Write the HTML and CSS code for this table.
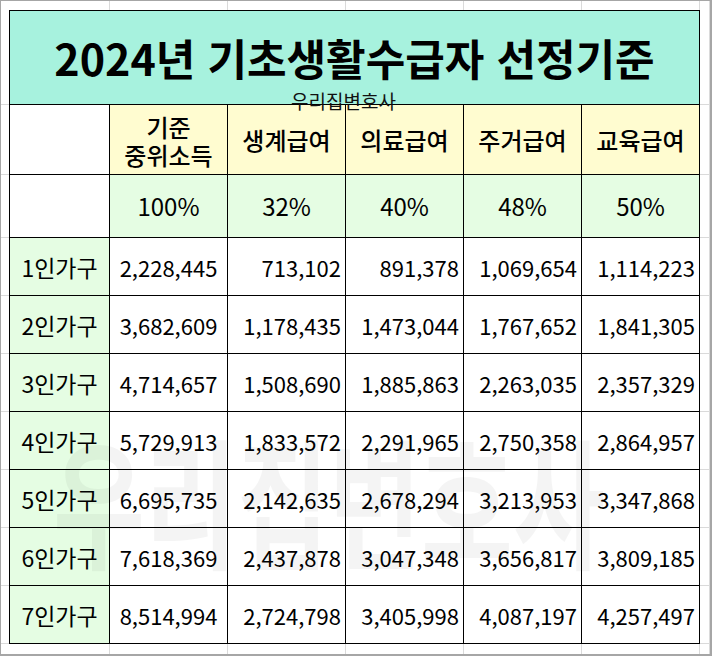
FILE: index.html
```html
<!DOCTYPE html>
<html lang="ko">
<head>
<meta charset="utf-8">
<title>2024년 기초생활수급자 선정기준</title>
<link rel="stylesheet" href="styles.css">
</head>
<body>
<div class="frame">
  <div class="sheet">
    <div class="cell title">2024년 기초생활수급자 선정기준</div>

    <div class="cell"></div>
    <div class="cell head two">기준<br>중위소득</div>
    <div class="cell head">생계급여</div>
    <div class="cell head">의료급여</div>
    <div class="cell head">주거급여</div>
    <div class="cell head">교육급여</div>

    <div class="cell"></div>
    <div class="cell pct">100%</div>
    <div class="cell pct">32%</div>
    <div class="cell pct">40%</div>
    <div class="cell pct">48%</div>
    <div class="cell pct">50%</div>

    <div class="cell label">1인가구</div>
    <div class="cell num mid">2,228,445</div>
    <div class="cell num">713,102</div>
    <div class="cell num">891,378</div>
    <div class="cell num">1,069,654</div>
    <div class="cell num">1,114,223</div>

    <div class="cell label">2인가구</div>
    <div class="cell num mid">3,682,609</div>
    <div class="cell num">1,178,435</div>
    <div class="cell num">1,473,044</div>
    <div class="cell num">1,767,652</div>
    <div class="cell num">1,841,305</div>

    <div class="cell label">3인가구</div>
    <div class="cell num mid">4,714,657</div>
    <div class="cell num">1,508,690</div>
    <div class="cell num">1,885,863</div>
    <div class="cell num">2,263,035</div>
    <div class="cell num">2,357,329</div>

    <div class="cell label">4인가구</div>
    <div class="cell num mid">5,729,913</div>
    <div class="cell num">1,833,572</div>
    <div class="cell num">2,291,965</div>
    <div class="cell num">2,750,358</div>
    <div class="cell num">2,864,957</div>

    <div class="cell label">5인가구</div>
    <div class="cell num mid">6,695,735</div>
    <div class="cell num">2,142,635</div>
    <div class="cell num">2,678,294</div>
    <div class="cell num">3,213,953</div>
    <div class="cell num">3,347,868</div>

    <div class="cell label">6인가구</div>
    <div class="cell num mid">7,618,369</div>
    <div class="cell num">2,437,878</div>
    <div class="cell num">3,047,348</div>
    <div class="cell num">3,656,817</div>
    <div class="cell num">3,809,185</div>

    <div class="cell label">7인가구</div>
    <div class="cell num mid">8,514,994</div>
    <div class="cell num">2,724,798</div>
    <div class="cell num">3,405,998</div>
    <div class="cell num">4,087,197</div>
    <div class="cell num">4,257,497</div>

    <div class="stamp">우리집변호사</div>
    <div class="watermark" aria-hidden="true">우리집변호사</div>
  </div>
</div>
</body>
</html>
```

FILE: styles.css
```css
html, body {
  margin: 0;
  padding: 0;
  background: #fff;
}

.frame {
  box-sizing: border-box;
  width: 712px;
  height: 656px;
  border: 1px solid #a6a6a6;
  border-right-width: 2px;
  border-bottom-width: 2px;
  padding: 9px 0 0 8px;
  background-color: #fff;
  background-image:
    linear-gradient(#dadada, #dadada),
    linear-gradient(#dadada, #dadada),
    linear-gradient(#dadada, #dadada),
    linear-gradient(#dadada, #dadada),
    linear-gradient(#dadada, #dadada),
    linear-gradient(#dadada, #dadada),
    linear-gradient(#dadada, #dadada),
    linear-gradient(#dadada, #dadada),
    linear-gradient(#dadada, #dadada),
    linear-gradient(#dadada, #dadada),
    linear-gradient(#dadada, #dadada),
    linear-gradient(#dadada, #dadada),
    linear-gradient(#dadada, #dadada),
    linear-gradient(#dadada, #dadada),
    linear-gradient(#dadada, #dadada),
    linear-gradient(#dadada, #dadada),
    linear-gradient(#dadada, #dadada);
  background-repeat: no-repeat;
  background-size:
    1px 100%, 1px 100%, 1px 100%, 1px 100%, 1px 100%, 1px 100%, 1px 100%,
    100% 1px, 100% 1px, 100% 1px, 100% 1px, 100% 1px,
    100% 1px, 100% 1px, 100% 1px, 100% 1px, 100% 1px;
  background-position:
    108px 0, 226px 0, 344px 0, 462px 0, 580px 0, 698px 0, 708px 0,
    0 103px, 0 173px, 0 236px, 0 294px, 0 352px,
    0 410px, 0 468px, 0 526px, 0 584px, 0 642px;
}

.sheet {
  position: relative;
  display: grid;
  grid-template-columns: 99px repeat(5, 117px);
  grid-template-rows: 93px 69px 62px repeat(7, 57px);
  gap: 1px;
  padding: 1px;
  width: max-content;
  background: #000;
  overflow: hidden;
  font-family: "Noto Sans CJK KR", "Noto Sans", sans-serif;
  color: #000;
}

.cell {
  display: flex;
  align-items: center;
  justify-content: center;
  background: #fff;
  font-size: 22px;
  line-height: 26px;
  white-space: nowrap;
}

.title {
  grid-column: 1 / -1;
  background: #a7f2de;
  font-size: 43px;
  font-weight: 700;
  line-height: 50px;
  padding-bottom: 2px;
}

.head {
  background: #fffcd0;
  font-size: 24px;
  font-weight: 500;
}

.head.two {
  text-align: center;
  line-height: 28px;
  padding-top: 2px;
}

.pct {
  background: #e5fde3;
  font-size: 24px;
}

.label {
  background: #e5fde3;
  font-size: 23px;
}

.num {
  justify-content: flex-end;
  padding-right: 4px;
}

.num.mid {
  justify-content: center;
  padding-right: 0;
}

.stamp {
  position: absolute;
  left: 282px;
  top: 80px;
  font-size: 19px;
  line-height: 22px;
  color: #111;
  pointer-events: none;
}

.watermark {
  position: absolute;
  left: 44px;
  top: 438px;
  font-size: 100px;
  font-weight: 700;
  line-height: 100px;
  transform: scaleY(1.4);
  transform-origin: 50% 50%;
  color: rgba(0, 0, 0, 0.045);
  pointer-events: none;
}
```
